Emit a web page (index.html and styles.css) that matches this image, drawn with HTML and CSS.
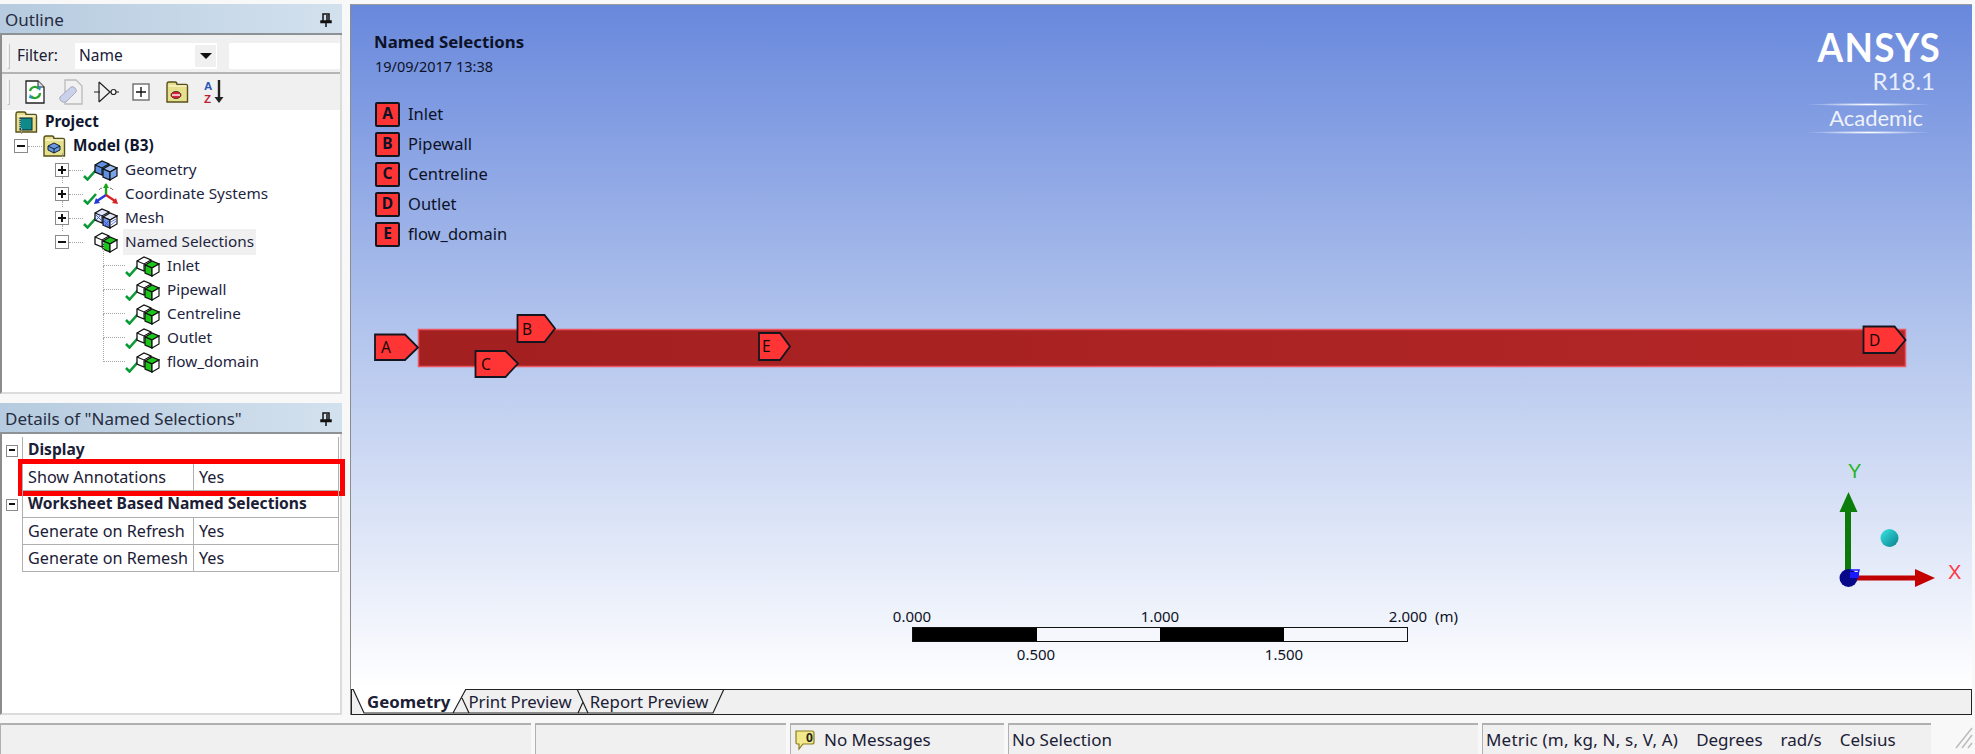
FILE: index.html
```html
<!DOCTYPE html>
<html lang="en">
<head>
    <meta charset="UTF-8">
    <title>Named Selections</title>
    <link rel="stylesheet" href="styles.css">
</head>
<body>
    <svg class="defs" width="0" height="0">
        <symbol id="pin" viewBox="0 0 12 14">
            <path d="M3 1h6v7H3zM1 8h10v1.500H1zM6 9v5M7 2v6" fill="none" stroke="#111" stroke-width="1.500"/>
        </symbol>
        <symbol id="check" viewBox="0 0 14 12">
            <path d="M1 7l3.500 3.500L13 1" fill="none" stroke="#0b9a38" stroke-width="2.600"/>
        </symbol>
        <symbol id="cube-green" viewBox="0 0 24 22">
            <path d="M1 6l7-4 7 3v7l-7 4-7-3z" fill="#fff" stroke="#111" stroke-width="1.300"/>
            <path d="M1 6l7 3 7-4M8 9v7" fill="none" stroke="#111" stroke-width="1.100"/>
            <path d="M9 10l7-4 7 3-7 4z" fill="#19c719" stroke="#111" stroke-width="1.200"/>
            <path d="M9 10l7 3v8l-7-3z" fill="#19c719" stroke="#111" stroke-width="1.200"/>
            <path d="M16 13l7-4v8l-7 4z" fill="#fff" stroke="#111" stroke-width="1.200"/>
        </symbol>
        <symbol id="cube-blue" viewBox="0 0 24 22">
            <path d="M1 6l7-4 7 3v7l-7 4-7-3z" fill="#5f8fe0" stroke="#111" stroke-width="1.300"/>
            <path d="M1 6l7 3 7-4M8 9v7" fill="none" stroke="#111" stroke-width="1.100"/>
            <path d="M9 10l7-4 7 3-7 4z" fill="#9dbdf0" stroke="#111" stroke-width="1.200"/>
            <path d="M9 10l7 3v8l-7-3z" fill="#5f8fe0" stroke="#111" stroke-width="1.200"/>
            <path d="M16 13l7-4v8l-7 4z" fill="#7ba4e8" stroke="#111" stroke-width="1.200"/>
        </symbol>
        <symbol id="cube-mesh" viewBox="0 0 24 22">
            <path d="M1 6l7-4 7 3v7l-7 4-7-3z" fill="#dfe6fa" stroke="#111" stroke-width="1.300"/>
            <path d="M1 6l7 3 7-4M8 9v7" fill="none" stroke="#111" stroke-width="1.100"/>
            <path d="M9 10l7-4 7 3-7 4z" fill="#dfe6fa" stroke="#111" stroke-width="1.200"/>
            <path d="M9 10l7 3v8l-7-3z" fill="#6f8fe8" stroke="#111" stroke-width="1.200"/>
            <path d="M16 13l7-4v8l-7 4z" fill="#fff" stroke="#111" stroke-width="1.200"/>
            <path d="M10 14l5 5M15 14l-5 5M2 8l5 5M7 8l-5 5M17 15l5-3M17 18l5-4" stroke="#2f4fe0" stroke-width=".8" fill="none"/>
        </symbol>
        <symbol id="folder" viewBox="0 0 24 24">
            <path d="M2 4.500Q2 2 4 2h6q2 0 2 2.500h9q1.500 0 1.500 1.500v16H2z" fill="#e6df8c" stroke="#57501a" stroke-width="1.400"/>
            <path d="M3.500 6h18" stroke="#fbf8d0" stroke-width="1.400"/>
        </symbol>
    </svg>

    <div class="top-strip"></div>

    <div class="main">
        <div class="side">
            <section class="panel outline">
                <div class="panel-head"><span>Outline</span><svg class="pin"><use href="#pin"/></svg></div>
                <div class="panel-body">
                    <div class="filter-bar">
                        <span class="grip"></span>
                        <label class="filter-label">Filter:</label>
                        <div class="select"><span>Name</span><span class="select-btn"><i class="arrow"></i></span></div>
                        <div class="filter-input"></div>
                    </div>
                    <div class="toolbar">
                        <span class="grip"></span>
                        <svg class="tool" width="22" height="26" viewBox="0 0 22 26">
                            <path d="M2 2h12l6 6v16H2z" fill="#fff" stroke="#222" stroke-width="1.300"/>
                            <path d="M14 2v6h6" fill="#ddd" stroke="#222"/>
                            <path d="M6 12a5 5 0 0 1 9-2M16 14a5 5 0 0 1-9 3" fill="none" stroke="#2aa52a" stroke-width="2.200"/>
                            <path d="M13 7l4 1-1 4zM9 20l-4-1 1-4z" fill="#1f8fc0"/>
                        </svg>
                        <svg class="tool" width="26" height="26" viewBox="0 0 26 26">
                            <path d="M7 1h11l6 6v18H7z" fill="#f1f1f1" stroke="#bbb" stroke-width="1.300"/>
                            <path d="M2 18L13 8q2-1 4 1t1 4L8 23q-3 1-5-1t-1-4z" fill="#c9d2ea" stroke="#aab" stroke-width="1"/>
                        </svg>
                        <svg class="tool" width="26" height="22" viewBox="0 0 26 22">
                            <path d="M1 11h6M6 1v20M6 1l11 10L6 21M17 11h2M23 11h3" fill="none" stroke="#222" stroke-width="1.200"/>
                            <circle cx="20.500" cy="11" r="2.500" fill="#fff" stroke="#222" stroke-width="1.200"/>
                        </svg>
                        <svg class="tool" width="18" height="18" viewBox="0 0 18 18">
                            <path d="M1 1h16v16H1z" fill="#fff" stroke="#777" stroke-width="1.500"/>
                            <path d="M4 9h10M9 4v10" stroke="#111" stroke-width="1.400"/>
                        </svg>
                        <svg class="tool" width="24" height="24"><use href="#folder"/><ellipse cx="11" cy="15" rx="5" ry="3.500" fill="#d8243a" stroke="#222" stroke-width=".8"/><path d="M7 15h8" stroke="#fff" stroke-width="1.400"/></svg>
                        <svg class="tool az" width="22" height="28" viewBox="0 0 22 28">
                            <text x="1" y="12" class="az-a">A</text>
                            <text x="1" y="25" class="az-z">Z</text>
                            <path d="M16 2v20" stroke="#222" stroke-width="2.400"/>
                            <path d="M11.500 19h9l-4.500 6z" fill="#222"/>
                        </svg>
                    </div>
                    <div class="tree">
                        <div class="row">
                            <svg class="ico root-ico" width="24" height="24"><use href="#folder"/><rect x="6" y="8" width="12" height="12" fill="#0f8a8a" stroke="#123" stroke-width="1"/><path d="M6 9v10" stroke="#fff" stroke-dasharray="1 1"/></svg>
                            <span class="label bold">Project</span>
                        </div>
                        <div class="row lvl1">
                            <span class="exp minus"></span><span class="dots dots-model"></span>
                            <svg class="ico" width="24" height="24"><use href="#folder"/><path d="M6 12l6-3 6 3v4l-6 3-6-3z" fill="#6a97e4" stroke="#123"/><path d="M6 12l6 3 6-3M12 15v4" fill="none" stroke="#123"/></svg>
                            <span class="label bold">Model (B3)</span>
                        </div>
                        <div class="row lvl2 has-line">
                            <span class="exp plus"></span><span class="dots"></span>
                            <svg class="chk" width="14" height="12"><use href="#check"/></svg>
                            <svg class="cube" width="24" height="22"><use href="#cube-blue"/></svg>
                            <span class="label">Geometry</span>
                        </div>
                        <div class="row lvl2 has-line">
                            <span class="exp plus"></span><span class="dots"></span>
                            <svg class="chk" width="14" height="12"><use href="#check"/></svg>
                            <svg class="cube" width="24" height="22" viewBox="0 0 24 22">
                                <path d="M12 12V1" stroke="#1aa71a" stroke-width="2.400"/><path d="M12 0l-3 5h6z" fill="#1aa71a"/>
                                <path d="M12 12l-9 6" stroke="#2438d8" stroke-width="2.400"/><path d="M0 21l2-6 4 5z" fill="#2438d8"/>
                                <path d="M12 12l9 6" stroke="#d82424" stroke-width="2.400"/><path d="M24 21l-6-1 4-5z" fill="#d82424"/>
                                <path d="M5 7a4 4 0 0 1 3-2M19 7a4 4 0 0 0-3-2" stroke="#777" fill="none"/>
                            </svg>
                            <span class="label">Coordinate Systems</span>
                        </div>
                        <div class="row lvl2 has-line">
                            <span class="exp plus"></span><span class="dots"></span>
                            <svg class="chk" width="14" height="12"><use href="#check"/></svg>
                            <svg class="cube" width="24" height="22"><use href="#cube-mesh"/></svg>
                            <span class="label">Mesh</span>
                        </div>
                        <div class="row lvl2 named">
                            <span class="exp minus"></span><span class="dots"></span>
                            <span class="chk-gap"></span>
                            <svg class="cube" width="24" height="22"><use href="#cube-green"/></svg>
                            <span class="label selected">Named Selections</span>
                        </div>
                        <div class="row lvl3">
                            <svg class="chk" width="14" height="12"><use href="#check"/></svg>
                            <svg class="cube" width="24" height="22"><use href="#cube-green"/></svg>
                            <span class="label">Inlet</span>
                        </div>
                        <div class="row lvl3">
                            <svg class="chk" width="14" height="12"><use href="#check"/></svg>
                            <svg class="cube" width="24" height="22"><use href="#cube-green"/></svg>
                            <span class="label">Pipewall</span>
                        </div>
                        <div class="row lvl3">
                            <svg class="chk" width="14" height="12"><use href="#check"/></svg>
                            <svg class="cube" width="24" height="22"><use href="#cube-green"/></svg>
                            <span class="label">Centreline</span>
                        </div>
                        <div class="row lvl3">
                            <svg class="chk" width="14" height="12"><use href="#check"/></svg>
                            <svg class="cube" width="24" height="22"><use href="#cube-green"/></svg>
                            <span class="label">Outlet</span>
                        </div>
                        <div class="row lvl3 last">
                            <svg class="chk" width="14" height="12"><use href="#check"/></svg>
                            <svg class="cube" width="24" height="22"><use href="#cube-green"/></svg>
                            <span class="label">flow_domain</span>
                        </div>
                    </div>
                </div>
            </section>

            <section class="panel details">
                <div class="panel-head"><span>Details of "Named Selections"</span><svg class="pin"><use href="#pin"/></svg></div>
                <div class="panel-body details-body">
                    <div class="d-row group"><span class="exp minus"></span><div class="d-cell wide">Display</div></div>
                    <div class="d-row marked"><span class="exp-gap"></span><div class="d-cell name">Show Annotations</div><div class="d-cell">Yes</div></div>
                    <div class="d-row group"><span class="exp minus"></span><div class="d-cell wide">Worksheet Based Named Selections</div></div>
                    <div class="d-row"><span class="exp-gap"></span><div class="d-cell name">Generate on Refresh</div><div class="d-cell">Yes</div></div>
                    <div class="d-row"><span class="exp-gap"></span><div class="d-cell name">Generate on Remesh</div><div class="d-cell">Yes</div></div>
                </div>
            </section>
        </div>

        <div class="view-wrap">
            <div class="viewport">
                <div class="view-title">
                    <div class="bold">Named Selections</div>
                    <div class="view-date">19/09/2017 13:38</div>
                </div>
                <ul class="legend">
                    <li><b>A</b>Inlet</li>
                    <li><b>B</b>Pipewall</li>
                    <li><b>C</b>Centreline</li>
                    <li><b>D</b>Outlet</li>
                    <li><b>E</b>flow_domain</li>
                </ul>
                <div class="logo">
                    <div class="logo-name">ANSYS</div>
                    <div class="logo-rel">R18.1</div>
                    <div class="logo-ed">Academic</div>
                </div>

                <svg class="scene" width="1620" height="684" viewBox="351 5 1620 684">
                    <defs>
                        <linearGradient id="barFill" x1="0" x2="1" y1="0" y2="0">
                            <stop offset="0" stop-color="#a32020"/>
                            <stop offset="1" stop-color="#b32626"/>
                        </linearGradient>
                        <linearGradient id="aqua" x1="0" x2="1" y1="0" y2="1">
                            <stop offset="0" stop-color="#38e6e6"/>
                            <stop offset="1" stop-color="#0a7f8a"/>
                        </linearGradient>
                    </defs>
                    <rect x="418.500" y="329.500" width="1487" height="37" fill="url(#barFill)" stroke="#ec5562" stroke-width="1.500"/>
                    <g class="tag">
                        <path d="M375 334.500h30l13 13-13 12.500h-30z"/><text x="381" y="353">A</text>
                        <path d="M517.500 315h27l10.500 13.500-10.500 13.500h-27z"/><text x="522" y="335">B</text>
                        <path d="M475.500 351h30l12.500 12.500-12.500 13.500h-30z"/><text x="481" y="370">C</text>
                        <path d="M759 333h21l10 13.500-10 13.500h-21z"/><text x="762" y="352">E</text>
                        <path d="M1863.500 326.500h31l11 13.500-11 13h-31z"/><text x="1869" y="346">D</text>
                    </g>
                    <path d="M1848 575V510" stroke="#0b7a0b" stroke-width="6"/>
                    <path d="M1848.500 492l9 20h-18z" fill="#0b7d0b"/>
                    <path d="M1850 578h72" stroke="#c00000" stroke-width="5"/>
                    <path d="M1935 578l-20-9v18z" fill="#c40000"/>
                    <circle cx="1848.500" cy="578" r="9" fill="#08088a"/>
                    <path d="M1850 574h8l1-4h-9" fill="none" stroke="#1a1aff" stroke-width="1.500"/>
                    <path d="M1850 572h9v6h-9z" fill="#1a1aff"/>
                    <circle cx="1889.500" cy="538" r="9" fill="url(#aqua)"/>
                    <text class="axis y-axis" x="1848" y="478">Y</text>
                    <text class="axis x-axis" x="1948" y="579">X</text>
                </svg>

                <div class="scale">
                    <div class="scale-top"><span>0.000</span><span>1.000</span><span>2.000<em>(m)</em></span></div>
                    <div class="scale-bar"><i></i><i></i><i></i><i></i></div>
                    <div class="scale-bottom"><span>0.500</span><span>1.500</span></div>
                </div>
            </div>
            <div class="tabs">
                <svg class="tab-lines" width="380" height="26" viewBox="0 0 380 26">
                    <path d="M1 0l11 24h89l13-24z" fill="#fff"/>
                    <path d="M1 0l11 24h89l13-24H372L361 24H101M110 9l7 15M225 0l11 24M231 13l-5 11" fill="none" stroke="#222" stroke-width="1.200"/>
                </svg>
                <span class="tab active">Geometry</span>
                <span class="tab">Print Preview</span>
                <span class="tab">Report Preview</span>
            </div>
        </div>
    </div>

    <div class="status">
        <div class="s-cell s-a"></div>
        <div class="s-cell s-b"></div>
        <div class="s-cell s-c">
            <svg width="26" height="24" viewBox="0 0 26 24">
                <path d="M2 3h16q2 0 2 2v9q0 2-2 2H9l-4 5v-5H3q-1 0-1-2z" fill="#f2e98c" stroke="#8a7d20" stroke-width="1.200"/>
                <text x="12" y="14" class="msg-n">0</text>
            </svg>
            <span>No Messages</span>
        </div>
        <div class="s-cell s-d">No Selection</div>
        <div class="s-cell s-e"><span class="units">Metric (m, kg, N, s, V, A)</span><span>Degrees</span><span>rad/s</span><span>Celsius</span></div>
        <svg class="resize" width="22" height="26" viewBox="0 0 22 26">
            <path d="M4 25L20 5M10 25L20 12M16 25l4-5" stroke="#bbb" stroke-width="1.500"/>
        </svg>
    </div>
</body>
</html>
```
FILE: styles.css
```css
*, *::before, *::after {
    box-sizing: border-box;
}
html, body {
    margin: 0;
    height: 100%;
}
body {
    width: 1975px;
    height: 754px;
    overflow: hidden;
    display: flex;
    flex-direction: column;
    background: #f8f8f8;
    color: #1b2036;
    font-family: "Noto Sans", "Open Sans", sans-serif;
    font-size: 15.300px;
    line-height: 1;
}
.defs {
    position: absolute;
}
.bold {
    font-weight: 700;
}
.top-strip {
    height: 4px;
    flex: none;
}

/* main area */
.main {
    flex: 1;
    display: flex;
    gap: 8px;
    padding-bottom: 8px;
    min-height: 0;
}
.side {
    width: 342px;
    flex: none;
    display: flex;
    flex-direction: column;
    gap: 9px;
}
.panel {
    display: flex;
    flex-direction: column;
    background: #fff;
}
.outline {
    height: 390px;
}
.details {
    flex: 1;
}
.panel-head {
    height: 31px;
    flex: none;
    display: flex;
    align-items: center;
    justify-content: space-between;
    padding: 2px 10px 0 5px;
    font-size: 17px;
    color: #262c3f;
    background: linear-gradient(to right, #b6cbdf, #d3e1ee);
    border-bottom: 2px solid #8d9297;
}
.pin {
    width: 12px;
    height: 14px;
}
.panel-body {
    flex: 1;
    min-height: 0;
    border-left: 2px solid #8c8c8c;
    border-right: 2px solid #dcdcdc;
    border-bottom: 2px solid #dcdcdc;
}

/* filter row and toolbar */
.filter-bar {
    height: 39px;
    display: flex;
    align-items: center;
    background: #f0f0f0;
    border-bottom: 2px solid #b4b4b4;
    padding: 5px 0 0 5px;
}
.grip {
    width: 3px;
    height: 26px;
    flex: none;
    border: 1px solid #c4c4c4;
    border-left-color: #f8f8f8;
    border-top-color: #f8f8f8;
}
.filter-label {
    margin-left: 7px;
    width: 58px;
    font-size: 15.500px;
}
.select {
    width: 142px;
    height: 26px;
    display: flex;
    align-items: center;
    justify-content: space-between;
    padding-left: 4px;
    background: #fff;
    font-size: 15.500px;
}
.select-btn {
    width: 21px;
    height: 22px;
    margin-right: 1px;
    display: flex;
    align-items: center;
    justify-content: center;
    background: #f0f0f0;
}
.arrow {
    border: 6px solid transparent;
    border-top: 6px solid #111;
    border-bottom: 0;
}
.filter-input {
    width: 111px;
    height: 26px;
    margin-left: 12px;
    background: #fff;
}
.toolbar {
    height: 36px;
    display: flex;
    align-items: center;
    background: #f0f0f0;
    padding-left: 5px;
}
.tool {
    flex: none;
}
.toolbar .grip {
    margin-right: 14px;
}
.toolbar .tool:nth-of-type(1) { margin-right: 12px; }
.toolbar .tool:nth-of-type(2) { margin-right: 9px; }
.toolbar .tool:nth-of-type(3) { margin-right: 13px; }
.toolbar .tool:nth-of-type(4) { margin-right: 15px; }
.toolbar .tool:nth-of-type(5) { margin-right: 14px; }
.az-a, .az-z {
    font-family: "Liberation Sans", sans-serif;
    font-size: 11.500px;
    font-weight: 700;
}
.az-a { fill: #2c55b8; }
.az-z { fill: #c0202c; }

/* tree */
.row {
    height: 24px;
    display: flex;
    align-items: center;
    position: relative;
    padding-left: 12px;
}
.label {
    color: #1d2440;
    white-space: nowrap;
}
.label.bold {
    color: #10162e;
}
.root-ico {
    margin-right: 7px;
}
.lvl1 {
    padding-left: 12px;
}
.lvl1 .ico {
    margin-right: 7px;
}
.exp, .exp-gap {
    width: 14px;
    height: 14px;
    flex: none;
    position: relative;
}
.exp {
    border: 1.500px solid #8a8a8a;
    background: #fff;
}
.exp::before, .plus::after {
    content: "";
    position: absolute;
    background: #111;
}
.exp::before {
    left: 2px;
    right: 2px;
    top: 4.500px;
    height: 2px;
}
.plus::after {
    top: 2px;
    bottom: 2px;
    left: 4.500px;
    width: 2px;
}
.dots {
    width: 14px;
    flex: none;
    border-top: 1.500px dotted #a8a8a8;
}
.lvl2 {
    padding-left: 53px;
}
.chk {
    flex: none;
    margin-top: 9px;
    margin-right: -3px;
}
.chk-gap {
    width: 11px;
    flex: none;
}
.cube {
    flex: none;
    margin-right: 7px;
}
.selected {
    background: #f0f0f0;
    margin-left: -2px;
    padding: 5px 2px;
}
.named .label {
    margin-left: -2px;
}
.lvl1::after, .lvl2::before {
    content: "";
    position: absolute;
    border-left: 1.500px dotted #a8a8a8;
}
.lvl1::after {
    left: 19px;
    top: -6px;
    height: 6px;
}
.lvl2::before {
    left: 60px;
    top: -5px;
    height: 6px;
}
.lvl3 {
    padding-left: 123px;
}
.lvl3::before {
    content: "";
    position: absolute;
    left: 101px;
    top: -12px;
    height: 24px;
    width: 22px;
    border-left: 1.500px dotted #a8a8a8;
    border-bottom: 1.500px dotted #a8a8a8;
}

/* details table */
.details-body {
    padding-top: 3px;
}
.d-row {
    height: 27px;
    display: flex;
    align-items: center;
    position: relative;
}
.d-row .exp, .d-row .exp-gap {
    width: 12px;
    height: 12px;
    margin: 0 4px 0 4px;
}
.d-row .exp::before {
    top: 3.500px;
}
.d-cell {
    height: 100%;
    display: flex;
    align-items: center;
    padding-left: 5px;
    width: 145px;
    border-right: 1px solid #b0b0b0;
    border-bottom: 1px solid #b0b0b0;
    white-space: nowrap;
    font-size: 16.200px;
}
.d-cell.name {
    width: 172px;
    border-left: 1px solid #b0b0b0;
}
.d-cell.wide {
    width: 317px;
    border-left: 1px solid #b0b0b0;
    font-size: 15.600px;
    font-weight: 700;
}
.marked::after {
    content: "";
    position: absolute;
    left: 16px;
    top: -5px;
    width: 327px;
    height: 37px;
    border: 5px solid #ff0000;
    border-left-width: 4px;
}

/* viewport */
.view-wrap {
    flex: 1;
    display: flex;
    flex-direction: column;
    margin-right: 3px;
    border-left: 1.500px solid #8c8c8c;
    min-width: 0;
}
.viewport {
    flex: 1;
    position: relative;
    border-top: 1px solid #9c9c9c;
    background: linear-gradient(to bottom, #6888dc 0%, #b3c5ed 48%, #ffffff 100%);
    color: #0d1226;
}
.view-title {
    position: absolute;
    left: 23px;
    top: 29px;
    display: flex;
    flex-direction: column;
    gap: 8px;
    font-size: 16.800px;
}
.view-date {
    font-size: 14.500px;
    padding-left: 1px;
}
.legend {
    position: absolute;
    left: 24px;
    top: 94px;
    margin: 0;
    padding: 0;
    list-style: none;
    font-size: 16.500px;
}
.legend li {
    height: 30px;
    display: flex;
    align-items: center;
}
.legend b {
    width: 25px;
    height: 25px;
    margin-right: 8px;
    display: flex;
    align-items: center;
    justify-content: center;
    background: #ff3434;
    border: 2px solid #14161f;
    border-radius: 2px;
    font-size: 15.500px;
}
.logo {
    position: absolute;
    top: 21px;
    right: 37px;
    width: 130px;
    color: #fff;
    font-family: Lato, "Open Sans", sans-serif;
    text-align: right;
}
.logo-name {
    font-size: 41px;
    font-weight: 700;
    letter-spacing: 1.500px;
    margin-right: 6px;
    transform: scaleX(.9);
    transform-origin: right center;
}
.logo-rel {
    font-size: 24px;
    margin-top: 2px;
    color: #e8eefb;
}
.logo-ed {
    width: 125px;
    margin: 10px 4px 0 auto;
    padding: 4px 8px 5px 0;
    font-size: 22px;
    color: #eef2fc;
    background:
        radial-gradient(closest-side, #fff, rgba(255, 255, 255, 0)) top / 100% 3px no-repeat,
        radial-gradient(closest-side, #fff, rgba(255, 255, 255, 0)) bottom / 100% 3px no-repeat;
}
.scene {
    position: absolute;
    left: 0;
    top: 0;
}
.tag path {
    fill: #ff3434;
    stroke: #14161f;
    stroke-width: 1.800;
}
.tag text {
    font-size: 15.500px;
    fill: #1a0808;
}
.axis {
    font-size: 20px;
    font-family: "Liberation Sans", sans-serif;
}
.y-axis { fill: #25b425; }
.x-axis { fill: #ff3a4a; }

/* scale bar */
.scale {
    position: absolute;
    left: 561px;
    top: 604px;
    width: 496px;
    font-size: 15px;
}
.scale span {
    position: relative;
    width: 0;
    display: flex;
    justify-content: center;
    white-space: nowrap;
}
.scale-top, .scale-bottom {
    display: flex;
    justify-content: space-between;
    height: 16px;
}
.scale-bottom {
    justify-content: space-around;
    margin-top: 5px;
}
.scale em {
    font-style: normal;
    position: absolute;
    left: 24px;
    top: 0;
    margin-left: 3px;
}
.scale-bar {
    height: 15px;
    display: flex;
    margin-top: 2px;
    border: 1.500px solid #111;
    background: #fff;
}
.scale-bar i {
    flex: 1;
    background: #f5f7fd;
}
.scale-bar i:nth-child(odd) {
    background: #000;
}

/* tabs */
.tabs {
    height: 26px;
    flex: none;
    display: flex;
    align-items: center;
    position: relative;
    background: #f0f0f0;
    border: 1.500px solid #222;
    border-left: 1px solid #222;
    padding-left: 15px;
}
.tab-lines {
    position: absolute;
    left: 0;
    top: -1px;
}
.tab {
    position: relative;
    font-size: 16.800px;
    margin-right: 18px;
    white-space: nowrap;
}
.tab.active {
    font-weight: 700;
}

/* status bar */
.status {
    height: 31px;
    flex: none;
    display: flex;
    gap: 4px;
    font-size: 17px;
}
.s-cell {
    background: #f0f0f0;
    border-top: 2px solid #b0b0b0;
    border-left: 1px solid #b0b0b0;
    display: flex;
    align-items: center;
    padding-left: 3px;
    white-space: nowrap;
}
.s-a { width: 531px; }
.s-b { width: 251px; }
.s-c { width: 214px; gap: 4px; }
.s-d { width: 470px; }
.s-e { width: 449px; }
.s-e span {
    margin-right: 18px;
}
.s-e .units {
    letter-spacing: .2px;
}
.msg-n {
    font-size: 12px;
    font-weight: 700;
    fill: #222;
}
.resize {
    margin-left: auto;
    margin-right: 1px;
}
```
